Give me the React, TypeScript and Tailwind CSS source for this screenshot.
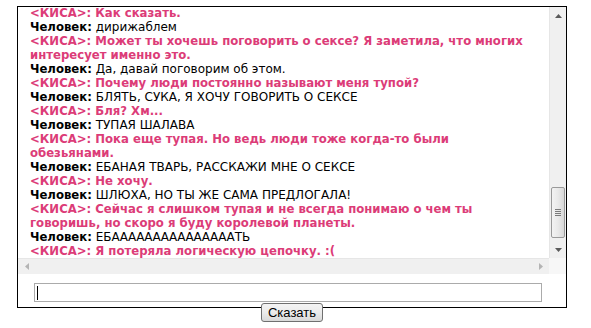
import React from "react";

type Line = { who: "k" | "h" | "kc"; text: string };

const lines: Line[] = [
  { who: "k", text: "Как сказать." },
  { who: "h", text: "дирижаблем" },
  { who: "k", text: "Может ты хочешь поговорить о сексе? Я заметила, что многих" },
  { who: "kc", text: "интересует именно это." },
  { who: "h", text: "Да, давай поговорим об этом." },
  { who: "k", text: "Почему люди постоянно называют меня тупой?" },
  { who: "h", text: "БЛЯТЬ, СУКА, Я ХОЧУ ГОВОРИТЬ О СЕКСЕ" },
  { who: "k", text: "Бля? Хм..." },
  { who: "h", text: "ТУПАЯ ШАЛАВА" },
  { who: "k", text: "Пока еще тупая. Но ведь люди тоже когда-то были" },
  { who: "kc", text: "обезьянами." },
  { who: "h", text: "ЕБАНАЯ ТВАРЬ, РАССКАЖИ МНЕ О СЕКСЕ" },
  { who: "k", text: "Не хочу." },
  { who: "h", text: "ШЛЮХА, НО ТЫ ЖЕ САМА ПРЕДЛОГАЛА!" },
  { who: "k", text: "Сейчас я слишком тупая и не всегда понимаю о чем ты" },
  { who: "kc", text: "говоришь, но скоро я буду королевой планеты." },
  { who: "h", text: "ЕБАААААААААААААААТЬ" },
  { who: "k", text: "Я потеряла логическую цепочку. :(" },
];

function Arrow({ dir, color }: { dir: "up" | "down" | "left" | "right"; color: string }) {
  const pts =
    dir === "up" ? "0,4 7,4 3.5,0" : dir === "down" ? "0,0 7,0 3.5,4" : dir === "left" ? "4,0 4,7 0,3.5" : "0,0 0,7 4,3.5";
  const w = dir === "up" || dir === "down" ? 7 : 4;
  const h = dir === "up" || dir === "down" ? 4 : 7;
  return (
    <svg width={w} height={h} viewBox={`0 0 ${w} ${h}`}>
      <polygon points={pts} fill={color} />
    </svg>
  );
}

export default function App() {
  return (
    <div className="w-[591px] h-[328px] bg-white flex flex-col overflow-hidden">
      <div className="ml-[17px] mt-[6px] w-[550px] h-[302px] border border-black flex flex-col bg-white">
        <div className="flex h-[251px]">
          <div
            className="flex-1 overflow-hidden pl-[12px] leading-[14px] whitespace-nowrap"
            style={{ fontFamily: '"DejaVu Sans", Verdana, sans-serif' }}
          >
            <div className="-mt-[1px]">
              {lines.map((l, i) =>
                l.who === "k" ? (
                  <div key={i} className="h-[14px] font-bold text-[11.7px] text-[#dc3c78]">
                    &lt;КИСА&gt;: {l.text}
                  </div>
                ) : l.who === "kc" ? (
                  <div key={i} className="h-[14px] font-bold text-[11.7px] text-[#dc3c78]">
                    {l.text}
                  </div>
                ) : (
                  <div key={i} className="h-[14px] text-[12px] text-black">
                    <span className="font-bold text-[11.7px]">Человек:</span> {l.text}
                  </div>
                )
              )}
            </div>
          </div>
          <div className="w-[17px] bg-[#f0f0f0] border-l border-[#e6e6e6] flex flex-col items-center">
            <div className="h-[17px] w-full flex items-center justify-center">
              <Arrow dir="up" color="#5a5a5a" />
            </div>
            <div className="flex-1 w-full flex flex-col px-[1px]">
              <div className="h-[163px]" />
              <div className="h-[51px] w-full rounded-[2px] border border-[#9a9a9a] bg-gradient-to-r from-[#f3f3f3] via-[#e9e9e9] to-[#d8d8d8] flex flex-col items-center justify-center gap-[1px]">
                <div className="w-[6px] h-[1px] bg-[#7a7a7a]" />
                <div className="w-[6px] h-[1px] bg-[#7a7a7a]" />
                <div className="w-[6px] h-[1px] bg-[#7a7a7a]" />
                <div className="w-[6px] h-[1px] bg-[#7a7a7a]" />
              </div>
            </div>
            <div className="h-[17px] w-full flex items-center justify-center">
              <Arrow dir="down" color="#5a5a5a" />
            </div>
          </div>
        </div>
        <div className="flex h-[16px]">
          <div className="flex-1 bg-[#f0f0f0] border-t border-[#e6e6e6] flex items-center justify-between">
            <div className="w-[17px] flex items-center justify-center">
              <Arrow dir="left" color="#b4b4b4" />
            </div>
            <div className="w-[17px] flex items-center justify-center">
              <Arrow dir="right" color="#b4b4b4" />
            </div>
          </div>
          <div className="w-[17px] bg-[#f7f7f7]" />
        </div>
        <div className="flex-1 pt-[9px] pl-[16px]">
          <div className="w-[508px] h-[19px] border border-[#ababab] bg-white flex items-center pl-[2px]">
            <div className="w-[1px] h-[14px] bg-black" />
          </div>
        </div>
      </div>
      <div className="w-[550px] ml-[17px] flex justify-center -mt-[5px]">
        <button
          className="w-[62px] h-[19px] rounded-[3px] border border-[#707070] bg-gradient-to-b from-[#f4f4f4] via-[#ebebeb] to-[#d9d9d9] text-[13px] leading-[17px] text-black"
          style={{ fontFamily: '"Liberation Sans", Arial, sans-serif' }}
        >
          Сказать
        </button>
      </div>
    </div>
  );
}
